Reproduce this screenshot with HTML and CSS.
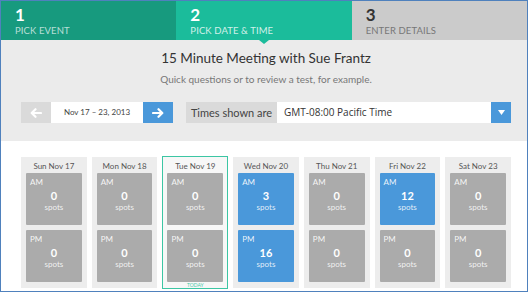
FILE: index.html
```html
<!DOCTYPE html>
<html>
<head>
<meta charset="utf-8">
<link rel="stylesheet" href="styles.css">
</head>
<body>
<div class="frame">
  <div class="steps">
    <div class="step step-done"><div class="num">1</div><div class="label">PICK EVENT</div></div>
    <div class="step step-active"><div class="num">2</div><div class="label">PICK DATE &amp; TIME</div><span class="pointer"></span></div>
    <div class="step step-next"><div class="num">3</div><div class="label">ENTER DETAILS</div></div>
  </div>
  <div class="intro">
    <h1 class="title">15 Minute Meeting with Sue Frantz</h1>
    <p class="subtitle">Quick questions or to review a test, for example.</p>
    <div class="nav">
      <div class="week">
        <button class="arrow arrow-prev"><svg width="12" height="10" viewBox="0 0 12 10"><path d="M11 5H2M5.5 1.2L1.7 5l3.8 3.8" fill="none" stroke="#fff" stroke-width="2.2" stroke-linecap="round" stroke-linejoin="round"/></svg></button>
        <div class="range">Nov 17 – 23, 2013</div>
        <button class="arrow arrow-next"><svg width="12" height="10" viewBox="0 0 12 10"><path d="M1 5h9M6.5 1.2L10.3 5 6.5 8.8" fill="none" stroke="#fff" stroke-width="2.2" stroke-linecap="round" stroke-linejoin="round"/></svg></button>
      </div>
      <div class="tz">
        <div class="tz-label">Times shown are</div>
        <div class="tz-select">GMT-08:00 Pacific Time</div>
        <div class="tz-caret"><svg width="7" height="5" viewBox="0 0 7 5"><path d="M0 0h7L3.5 5z" fill="#fff"/></svg></div>
      </div>
    </div>
  </div>
  <div class="calendar">
    <div class="day">
      <div class="dname">Sun Nov 17</div>
      <div class="slot"><span class="ap">AM</span><b>0</b><span class="sp">spots</span></div>
      <div class="slot"><span class="ap">PM</span><b>0</b><span class="sp">spots</span></div>
    </div>
    <div class="day">
      <div class="dname">Mon Nov 18</div>
      <div class="slot"><span class="ap">AM</span><b>0</b><span class="sp">spots</span></div>
      <div class="slot"><span class="ap">PM</span><b>0</b><span class="sp">spots</span></div>
    </div>
    <div class="day today">
      <div class="dname">Tue Nov 19</div>
      <div class="slot"><span class="ap">AM</span><b>0</b><span class="sp">spots</span></div>
      <div class="slot"><span class="ap">PM</span><b>0</b><span class="sp">spots</span></div>
      <div class="today-label">TODAY</div>
    </div>
    <div class="day">
      <div class="dname">Wed Nov 20</div>
      <div class="slot open"><span class="ap">AM</span><b>3</b><span class="sp">spots</span></div>
      <div class="slot open"><span class="ap">PM</span><b>16</b><span class="sp">spots</span></div>
    </div>
    <div class="day">
      <div class="dname">Thu Nov 21</div>
      <div class="slot"><span class="ap">AM</span><b>0</b><span class="sp">spots</span></div>
      <div class="slot"><span class="ap">PM</span><b>0</b><span class="sp">spots</span></div>
    </div>
    <div class="day">
      <div class="dname">Fri Nov 22</div>
      <div class="slot open"><span class="ap">AM</span><b>12</b><span class="sp">spots</span></div>
      <div class="slot"><span class="ap">PM</span><b>0</b><span class="sp">spots</span></div>
    </div>
    <div class="day">
      <div class="dname">Sat Nov 23</div>
      <div class="slot"><span class="ap">AM</span><b>0</b><span class="sp">spots</span></div>
      <div class="slot"><span class="ap">PM</span><b>0</b><span class="sp">spots</span></div>
    </div>
  </div>
</div>
</body>
</html>
```
FILE: styles.css
```css
* { box-sizing: border-box; }
html, body { margin: 0; padding: 0; background: #fff; }
body { font-family: Lato, "Open Sans", sans-serif; }

.frame {
  width: 528px;
  height: 292px;
  border: 1px solid #4f81bd;
  background: #fff;
  display: flex;
  flex-direction: column;
}

.steps { display: flex; height: 39px; flex: none; }
.step { flex: 1; padding: 6px 0 0 14px; position: relative; }
.step-done { background: #179a7e; color: #fff; }
.step-active { background: #1bbc9b; color: #fff; }
.step-next { background: #cbcbcb; color: #333; }
.num { font-size: 17px; font-weight: 700; line-height: 16px; }
.label { font-size: 9.5px; line-height: 12px; margin-top: 2px; letter-spacing: 0.1px; }
.step-done .label { color: rgba(255,255,255,0.7); }
.step-active .label { color: rgba(255,255,255,0.8); }
.step-next .label { color: #777; }
.pointer {
  position: absolute;
  left: 50%;
  bottom: -4px;
  margin-left: -5px;
  width: 0; height: 0;
  border-left: 5px solid transparent;
  border-right: 5px solid transparent;
  border-top: 4px solid #1bbc9b;
  z-index: 2;
}

.intro {
  background: #ebebeb;
  height: 101px;
  flex: none;
  padding: 8px 16px 0 20px;
  text-align: center;
}
.title { margin: 0; font-size: 13.5px; font-weight: 400; line-height: 20px; color: #333; }
.subtitle { margin: 4px 0 0; font-size: 10px; line-height: 14px; color: #777; }

.nav { display: flex; margin-top: 16px; height: 21px; }
.week { display: flex; }
.arrow {
  width: 30px; height: 21px; border: 0; padding: 0; margin: 0;
  display: flex; align-items: center; justify-content: center;
}
.arrow-prev { background: #dadada; }
.arrow-next { background: #4a98da; }
.range {
  width: 92px; background: #fff; font-size: 8px; color: #444;
  line-height: 21px; text-align: center;
}
.tz { display: flex; margin-left: 13px; flex: 1; }
.tz-label {
  width: 91px; background: #dadada; font-size: 11px; color: #444;
  line-height: 21px; text-align: center;
}
.tz-select {
  flex: 1; background: #fff; font-size: 10px; color: #333; line-height: 21px;
  text-align: left; padding-left: 7px; font-family: "Open Sans", Lato, sans-serif;
}
.tz-caret {
  width: 20px; background: #4a98da; display: flex; align-items: center; justify-content: center;
}

.calendar {
  flex: 1;
  background: #fff;
  padding: 16px 16px 0 20px;
  display: grid;
  grid-template-columns: repeat(7, 1fr);
  column-gap: 5px;
  align-items: start;
}
.day {
  background: #ededed;
  height: 131px;
  padding: 0 5px;
  display: flex;
  flex-direction: column;
  gap: 5px;
  position: relative;
}
.dname {
  font-size: 8px; color: #555; text-align: center; height: 11px; padding-top: 4px; line-height: 10px;
}
.slot {
  background: #ababab;
  height: 52px;
  border-radius: 1px;
  color: #fff;
  display: flex;
  flex-direction: column;
  align-items: center;
  padding-top: 4px;
  position: relative;
}
.slot.open { background: #4a98da; }
.ap { align-self: flex-start; font-size: 8px; line-height: 10px; padding-left: 4px; color: rgba(255,255,255,0.9); }
.slot b { font-size: 11px; line-height: 12px; margin-top: 3px; }
.sp { font-size: 8px; line-height: 10px; color: rgba(255,255,255,0.85); }
.today { border: 1px solid #3cc6a4; padding: 0 4px; margin-top: -1px; height: 133px; background: #f7f7f7; }
.today-label {
  position: absolute; bottom: 0; left: 0; right: 0; text-align: center;
  font-size: 5px; color: #4cc7a8; line-height: 6px;
}
```
